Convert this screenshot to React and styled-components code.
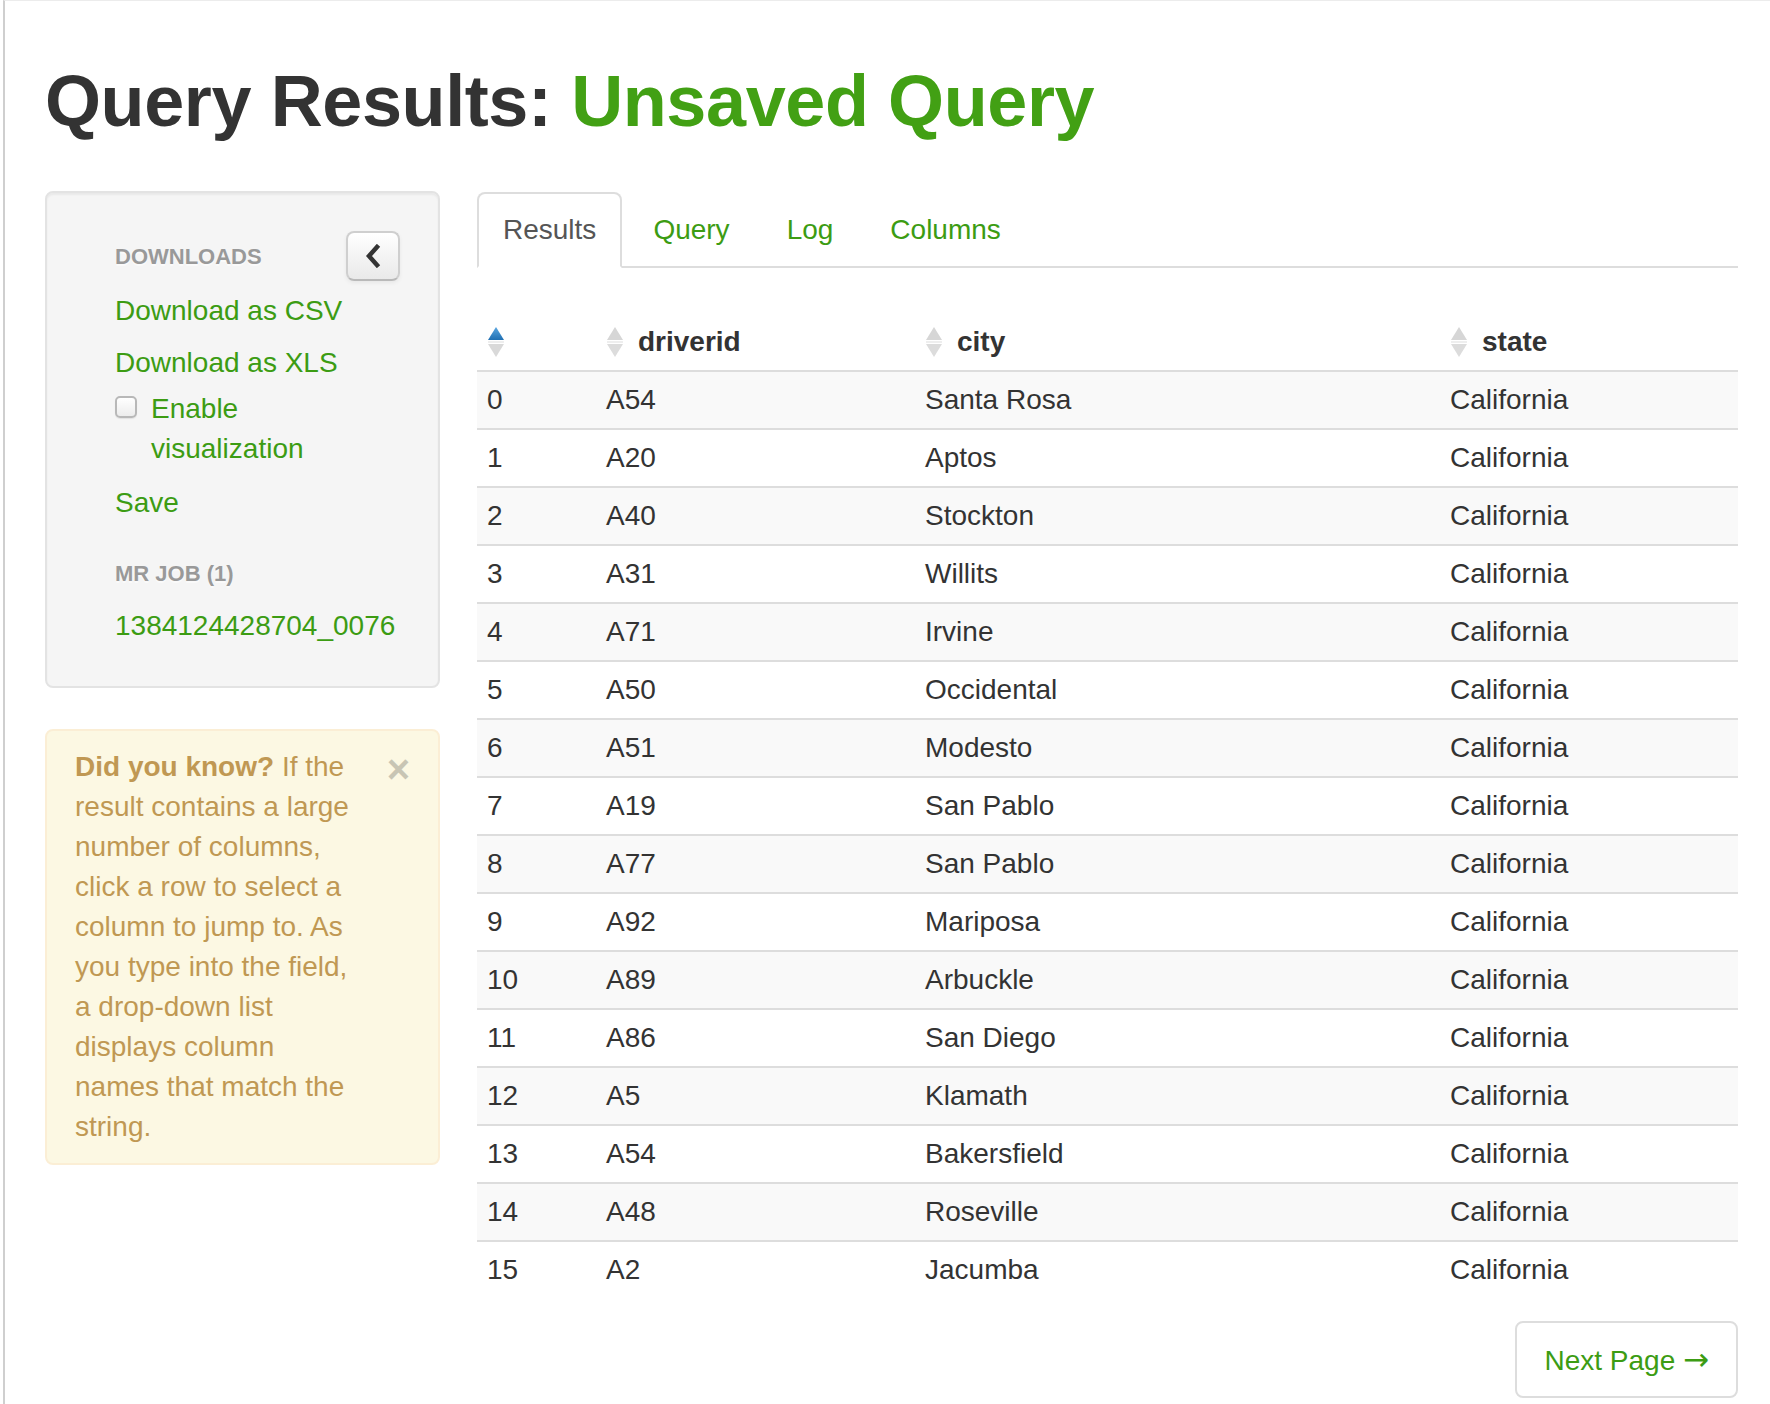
import React from 'react';
import styled, { createGlobalStyle } from 'styled-components';

const GREEN = '#3c9c13';

const GlobalStyle = createGlobalStyle`
    html, body {
        margin: 0;
        padding: 0;
        background: #fff;
    }
    body {
        font-family: 'Liberation Sans', Arial, Helvetica, sans-serif;
        font-size: 28px;
        line-height: 40px;
        color: #333;
    }
    * {
        box-sizing: border-box;
    }
`;

const ROWS = [
    ['A54', 'Santa Rosa'],
    ['A20', 'Aptos'],
    ['A40', 'Stockton'],
    ['A31', 'Willits'],
    ['A71', 'Irvine'],
    ['A50', 'Occidental'],
    ['A51', 'Modesto'],
    ['A19', 'San Pablo'],
    ['A77', 'San Pablo'],
    ['A92', 'Mariposa'],
    ['A89', 'Arbuckle'],
    ['A86', 'San Diego'],
    ['A5', 'Klamath'],
    ['A54', 'Bakersfield'],
    ['A48', 'Roseville'],
    ['A2', 'Jacumba'],
];

const Frame = styled.div`
    min-height: 100vh;
    margin-left: 3px;
    border-left: 2px solid #cfcfcf;
    border-top: 1px solid #ececec;
    padding: 0 32px 0 40px;
`;

const Title = styled.h1`
    margin: 64px 0 54px;
    font-size: 72px;
    line-height: 72px;
    font-weight: bold;
    letter-spacing: -0.4px;
    color: #333;
`;

const Accent = styled.span`
    color: #42a014;
`;

const Layout = styled.div`
    display: grid;
    grid-template-columns: 395px 1fr;
    column-gap: 37px;
    align-items: start;
`;

const Sidebar = styled.aside`
    display: flex;
    flex-direction: column;
    gap: 41px;
`;

const Well = styled.div`
    background: #f5f5f5;
    border: 2px solid #e3e3e3;
    border-radius: 8px;
    box-shadow: inset 0 2px 2px rgba(0, 0, 0, 0.05);
    padding: 38px 38px 34px;
`;

const NavList = styled.ul`
    list-style: none;
    margin: 0;
    padding: 0;
`;

const SectionHead = styled.li`
    display: flex;
    justify-content: space-between;
    align-items: flex-start;
    min-height: 54px;
    padding-left: 30px;
`;

const NavHeader = styled.li`
    padding: 6px 30px;
    margin-top: ${(p) => (p.$spaced ? '19px' : '0')};
    font-size: 22px;
    font-weight: bold;
    line-height: 40px;
    text-transform: uppercase;
    color: #999;
    text-shadow: 0 2px 0 rgba(255, 255, 255, 0.5);
`;

const HeaderText = styled.span`
    padding: 6px 0;
    font-size: 22px;
    font-weight: bold;
    line-height: 40px;
    text-transform: uppercase;
    color: #999;
    text-shadow: 0 2px 0 rgba(255, 255, 255, 0.5);
`;

const CollapseButton = styled.button`
    display: flex;
    align-items: center;
    justify-content: center;
    width: 54px;
    height: 50px;
    padding: 0;
    border: 2px solid #cfcfcf;
    border-bottom-color: #b9b9b9;
    border-radius: 8px;
    background: linear-gradient(#ffffff, #e9e9e9);
    box-shadow: inset 0 2px 0 rgba(255, 255, 255, 0.3), 0 2px 4px rgba(0, 0, 0, 0.06);
    cursor: pointer;
`;

const NavItem = styled.li`
    padding: 6px 30px;
`;

const NavLink = styled.a`
    color: ${GREEN};
    text-decoration: none;
    font-size: 28px;
    line-height: 40px;
`;

const CheckRow = styled.li`
    display: grid;
    grid-template-columns: 36px 1fr;
    padding: 0 30px;
    margin-bottom: 8px;
`;

const CheckBox = styled.input`
    appearance: none;
    width: 22px;
    height: 22px;
    margin: 7px 0 0;
    border: 2px solid #b8b8b8;
    border-radius: 5px;
    background: linear-gradient(#ffffff, #ececec);
    box-shadow: 0 1px 1px rgba(0, 0, 0, 0.08);
`;

const CheckLabel = styled.label`
    color: ${GREEN};
    line-height: 40px;
`;

const Alert = styled.div`
    position: relative;
    background: #fcf8e3;
    border: 2px solid #fbeed5;
    border-radius: 8px;
    padding: 16px 80px 16px 28px;
    color: #c09853;
    line-height: 40px;
`;

const CloseButton = styled.button`
    position: absolute;
    top: 18px;
    right: 28px;
    padding: 0;
    border: 0;
    background: none;
    font-family: 'Liberation Sans', Arial, sans-serif;
    font-size: 40px;
    font-weight: bold;
    line-height: 40px;
    color: #000;
    opacity: 0.2;
    cursor: pointer;
`;

const Main = styled.main`
    min-width: 0;
`;

const Tabs = styled.ul`
    display: flex;
    list-style: none;
    margin: 1px 0 46px;
    padding: 0;
    border-bottom: 2px solid #ddd;
`;

const TabItem = styled.li`
    margin-bottom: -2px;
    margin-right: 5px;
`;

const TabLink = styled.a`
    display: block;
    padding: 16px 24px;
    line-height: 40px;
    border: 2px solid ${(p) => (p.$active ? '#ddd' : 'transparent')};
    border-bottom-color: transparent;
    border-radius: 8px 8px 0 0;
    background: ${(p) => (p.$active ? '#fff' : 'transparent')};
    color: ${(p) => (p.$active ? '#555' : GREEN)};
    text-decoration: none;
`;

const Table = styled.table`
    width: 100%;
    table-layout: fixed;
    border-collapse: collapse;
    border-spacing: 0;
`;

const HeadCell = styled.th`
    padding: 8px 10px;
    text-align: left;
    font-weight: bold;
    line-height: 40px;
    color: #333;
`;

const HeadLabel = styled.span`
    display: flex;
    align-items: center;
    gap: 14px;
    height: 40px;
`;

const Row = styled.tr`
    background: ${(p) => (p.$striped ? '#f9f9f9' : '#fff')};
`;

const Cell = styled.td`
    padding: 8px 10px;
    line-height: 40px;
    border-top: 2px solid #ddd;
    color: #333;
    white-space: nowrap;
`;

const Pager = styled.div`
    display: flex;
    justify-content: flex-end;
    margin-top: 23px;
`;

const PagerButton = styled.a`
    display: block;
    height: 77px;
    padding: 0 27px;
    border: 2px solid #ddd;
    border-radius: 8px;
    background: #fff;
    color: ${GREEN};
    line-height: 73px;
    text-decoration: none;
    white-space: nowrap;
`;

const Arrow = styled.span`
    font-family: 'DejaVu Sans', 'Liberation Sans', sans-serif;
    font-size: 31px;
`;

const ChevronLeft = () => (
    <svg width="16" height="24" viewBox="0 0 16 24">
        <path d="M12 3 L4 12 L12 21" fill="none" stroke="#333" strokeWidth="4.5" strokeLinecap="square" />
    </svg>
);

const SortIcon = ({ active }) => (
    <svg width="18" height="30" viewBox="0 0 18 30">
        <defs>
            <linearGradient id="ascBlue" x1="0" y1="0" x2="0" y2="1">
                <stop offset="0" stopColor="#5aa6e0" />
                <stop offset="1" stopColor="#1f6fb2" />
            </linearGradient>
        </defs>
        <path d="M9 0 L17 13 L1 13 Z" fill={active ? 'url(#ascBlue)' : '#d6d6d6'} />
        <rect x="1" y="14" width="16" height="2" fill="#eeeeee" />
        <path d="M1 17 L17 17 L9 30 Z" fill={active ? '#d9d9d9' : '#dcdcdc'} />
    </svg>
);

const App = () => {
    return (
        <>
            <GlobalStyle />
            <Frame>
                <Title>
                    Query Results: <Accent>Unsaved Query</Accent>
                </Title>
                <Layout>
                    <Sidebar>
                        <Well>
                            <NavList>
                                <SectionHead>
                                    <HeaderText>Downloads</HeaderText>
                                    <CollapseButton aria-label='collapse'>
                                        <ChevronLeft />
                                    </CollapseButton>
                                </SectionHead>
                                <NavItem>
                                    <NavLink href='#'>Download as CSV</NavLink>
                                </NavItem>
                                <NavItem>
                                    <NavLink href='#'>Download as XLS</NavLink>
                                </NavItem>
                                <CheckRow>
                                    <CheckBox type='checkbox' id='viz' />
                                    <CheckLabel htmlFor='viz'>Enable visualization</CheckLabel>
                                </CheckRow>
                                <NavItem>
                                    <NavLink href='#'>Save</NavLink>
                                </NavItem>
                                <NavHeader $spaced>MR Job (1)</NavHeader>
                                <NavItem>
                                    <NavLink href='#'>1384124428704_0076</NavLink>
                                </NavItem>
                            </NavList>
                        </Well>
                        <Alert>
                            <CloseButton aria-label='close'>×</CloseButton>
                            <strong>Did you know?</strong> If the result contains a large number of columns,
                            click a row to select a column to jump to. As you type into the field, a drop-down
                            list displays column names that match the string.
                        </Alert>
                    </Sidebar>
                    <Main>
                        <Tabs>
                            <TabItem>
                                <TabLink href='#' $active>Results</TabLink>
                            </TabItem>
                            <TabItem>
                                <TabLink href='#'>Query</TabLink>
                            </TabItem>
                            <TabItem>
                                <TabLink href='#'>Log</TabLink>
                            </TabItem>
                            <TabItem>
                                <TabLink href='#'>Columns</TabLink>
                            </TabItem>
                        </Tabs>
                        <Table>
                            <colgroup>
                                <col style={{ width: '119px' }} />
                                <col style={{ width: '319px' }} />
                                <col style={{ width: '525px' }} />
                                <col />
                            </colgroup>
                            <thead>
                                <tr>
                                    <HeadCell>
                                        <HeadLabel>
                                            <SortIcon active />
                                        </HeadLabel>
                                    </HeadCell>
                                    <HeadCell>
                                        <HeadLabel>
                                            <SortIcon />
                                            driverid
                                        </HeadLabel>
                                    </HeadCell>
                                    <HeadCell>
                                        <HeadLabel>
                                            <SortIcon />
                                            city
                                        </HeadLabel>
                                    </HeadCell>
                                    <HeadCell>
                                        <HeadLabel>
                                            <SortIcon />
                                            state
                                        </HeadLabel>
                                    </HeadCell>
                                </tr>
                            </thead>
                            <tbody>
                                {ROWS.map(([driver, city], i) => (
                                    <Row key={i} $striped={i % 2 === 0}>
                                        <Cell>{i}</Cell>
                                        <Cell>{driver}</Cell>
                                        <Cell>{city}</Cell>
                                        <Cell>California</Cell>
                                    </Row>
                                ))}
                            </tbody>
                        </Table>
                        <Pager>
                            <PagerButton href='#'>
                                Next Page <Arrow>→</Arrow>
                            </PagerButton>
                        </Pager>
                    </Main>
                </Layout>
            </Frame>
        </>
    );
};

export default App;
